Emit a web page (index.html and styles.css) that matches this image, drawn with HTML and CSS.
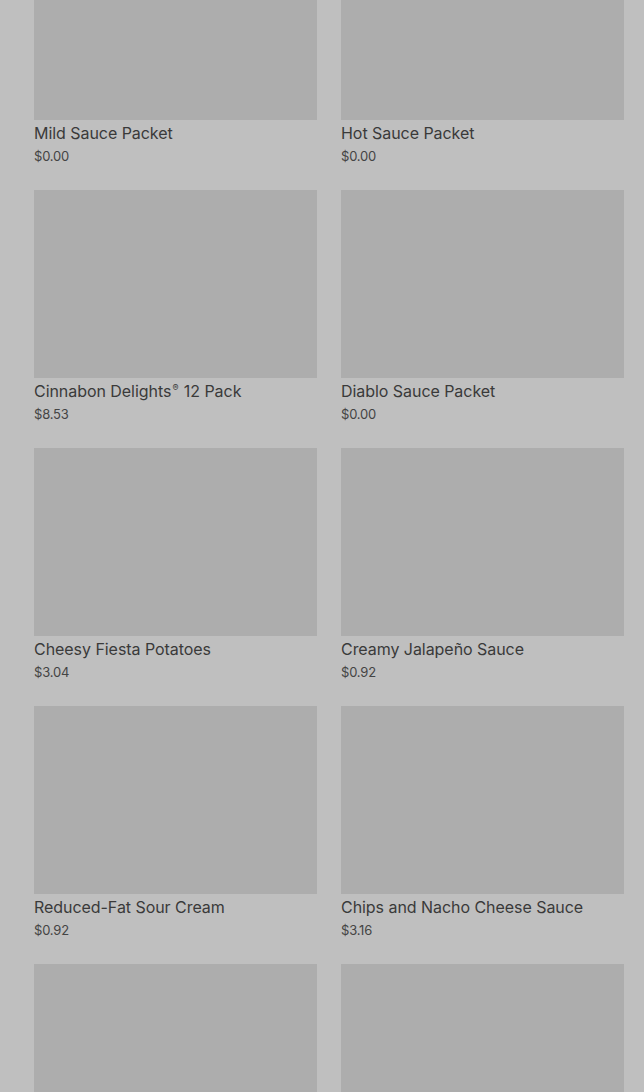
FILE: index.html
```html
<!DOCTYPE html>
<html lang="en">
<head>
    <meta charset="UTF-8">
    <meta name="viewport" content="width=device-width, initial-scale=1.0">
    <title>Menu</title>
    <link rel="stylesheet" href="styles.css">
</head>
<body>
    <div class="grid">
        <div class="card">
            <div class="thumb"></div>
            <div class="name">Mild Sauce Packet</div>
            <div class="price">$0.00</div>
        </div>
        <div class="card">
            <div class="thumb"></div>
            <div class="name">Hot Sauce Packet</div>
            <div class="price">$0.00</div>
        </div>
        <div class="card">
            <div class="thumb"></div>
            <div class="name">Cinnabon Delights<sup>®</sup> 12 Pack</div>
            <div class="price">$8.53</div>
        </div>
        <div class="card">
            <div class="thumb"></div>
            <div class="name">Diablo Sauce Packet</div>
            <div class="price">$0.00</div>
        </div>
        <div class="card">
            <div class="thumb"></div>
            <div class="name">Cheesy Fiesta Potatoes</div>
            <div class="price">$3.04</div>
        </div>
        <div class="card">
            <div class="thumb"></div>
            <div class="name">Creamy Jalapeño Sauce</div>
            <div class="price">$0.92</div>
        </div>
        <div class="card">
            <div class="thumb"></div>
            <div class="name">Reduced-Fat Sour Cream</div>
            <div class="price">$0.92</div>
        </div>
        <div class="card">
            <div class="thumb"></div>
            <div class="name">Chips and Nacho Cheese Sauce</div>
            <div class="price">$3.16</div>
        </div>
        <div class="card">
            <div class="thumb"></div>
        </div>
        <div class="card">
            <div class="thumb"></div>
        </div>
    </div>
</body>
</html>
```

FILE: styles.css
```css
html, body {
    height: 100%;
    overflow: hidden;
}

body {
    margin: 0;
    background: #bfbfbf;
    font-family: Inter, "Noto Sans", sans-serif;
    color: #3a3a3a;
}

.grid {
    display: grid;
    grid-template-columns: 283px 283px;
    column-gap: 24px;
    padding: 0 20px 0 34px;
    margin-top: -68px;
}

.card {
    height: 258px;
}

.thumb {
    height: 188px;
    background: #adadad;
}

.name {
    margin-top: 3px;
    font-size: 16px;
    line-height: 20px;
    letter-spacing: -0.05px;
    color: #3a3a3a;
}

.name sup {
    font-size: 9px;
    vertical-align: 6px;
    line-height: 0;
    margin: 0 1px;
}

.price {
    margin-top: 4px;
    font-size: 13px;
    line-height: 18px;
    letter-spacing: -0.2px;
    color: #444;
}
```
